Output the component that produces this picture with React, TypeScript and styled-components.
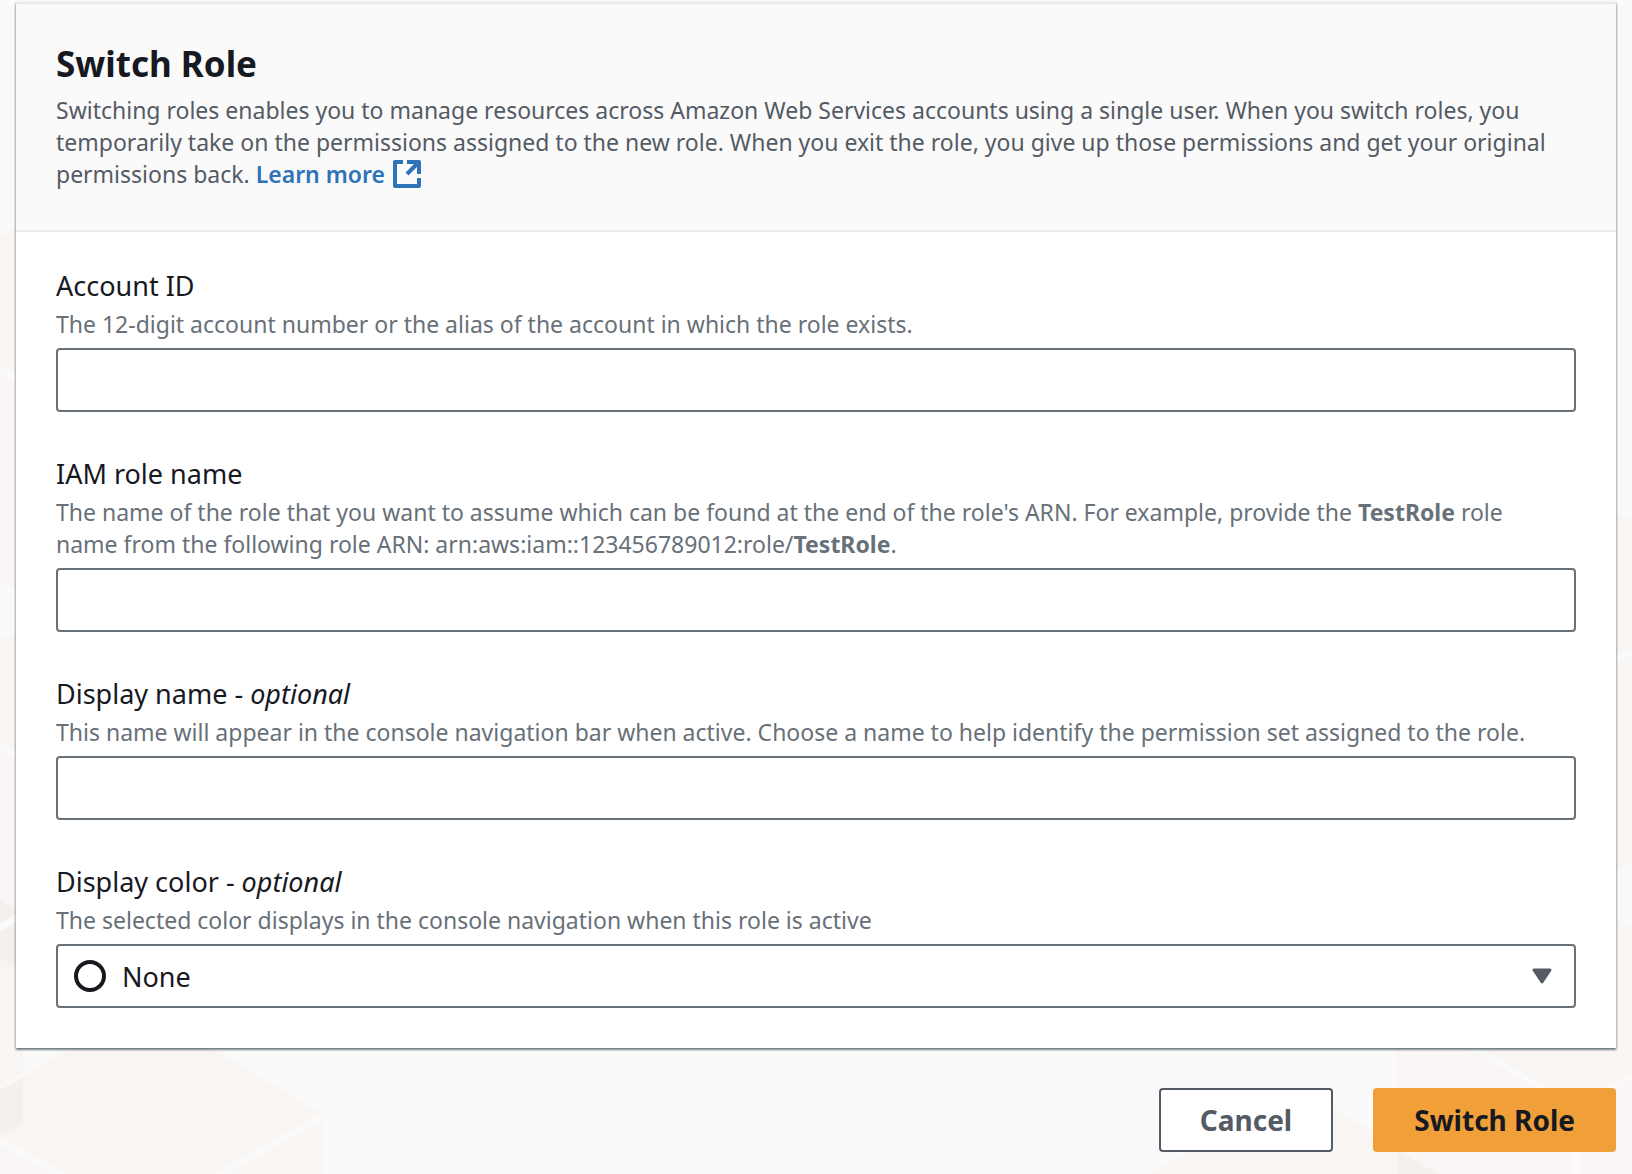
import React, { useId } from "react";
import styled, { createGlobalStyle } from "styled-components";

const color = {
  page: "#fafafa",
  header: "#fafafa",
  divider: "#eaeded",
  heading: "#16191f",
  body: "#545b64",
  hint: "#687078",
  link: "#2e73b8",
  primary: "#f19f39",
};

const GlobalStyle = createGlobalStyle`
  *, *::before, *::after { box-sizing: border-box; }
  html, body, #root { min-height: 100%; }
  html { height: 100%; }
  body {
    margin: 0;
    background: ${color.page};
    color: ${color.heading};
    font-family: "Noto Sans", "Open Sans", sans-serif;
    font-size: 23px;
    font-weight: 400;
    line-height: 32px;
  }
`;

const Page = styled.main`
  position: relative;
  isolation: isolate;
  overflow: hidden;
  min-height: 100vh;
  padding: 2px 16px 22px;
`;

const Backdrop = styled.svg`
  position: absolute;
  top: 0;
  z-index: -1;
  width: 340px;
  height: 1174px;
`;

const LeftBackdrop = styled(Backdrop)`
  left: 0;
`;

const RightBackdrop = styled(Backdrop)`
  right: 0;
  width: 500px;
`;

const Form = styled.form`
  display: flex;
  flex-direction: column;
  gap: 40px;
`;

const Card = styled.section`
  background: #fff;
  border-top: 2px solid ${color.divider};
  box-shadow:
    0 2px 2px 0 rgba(0, 28, 36, 0.4),
    1px 1px 2px 0 rgba(0, 28, 36, 0.2),
    -1px 1px 2px 0 rgba(0, 28, 36, 0.2);
`;

const CardHeader = styled.header`
  padding: 38px 40px 40px;
  background: ${color.header};
  border-bottom: 2px solid ${color.divider};
`;

const Title = styled.h1`
  margin: 0 0 8px;
  font-size: 35px;
  line-height: 44px;
  font-weight: 700;
`;

const Description = styled.p`
  margin: 0;
  color: ${color.body};
`;

const Link = styled.a`
  color: ${color.link};
  font-weight: 600;
  text-decoration: none;
  white-space: nowrap;

  svg {
    width: 28px;
    height: 28px;
    margin-left: 8px;
    vertical-align: -5px;
  }
`;

const Fields = styled.div`
  display: flex;
  flex-direction: column;
  gap: 40px;
  padding: 32px 40px 40px;
`;

const FieldBlock = styled.div`
  display: flex;
  flex-direction: column;
`;

const Label = styled.label`
  font-size: 27px;
  line-height: 44px;
`;

const Hint = styled.p`
  margin: 0 0 8px;
  padding-right: 16px;
  color: ${color.hint};
`;

const controlBox = `
  width: 100%;
  height: 64px;
  margin: 0;
  border: 2px solid ${color.hint};
  border-radius: 4px;
  background: #fff;
  color: ${color.heading};
  font-family: inherit;
  font-size: 27px;
  font-weight: inherit;
`;

const TextInput = styled.input`
  ${controlBox}
  padding: 0 16px;
`;

const SelectWrap = styled.div`
  display: grid;
  align-items: center;

  > * {
    grid-area: 1 / 1;
  }

  > svg {
    pointer-events: none;
  }
`;

const Select = styled.select`
  ${controlBox}
  appearance: none;
  padding: 0 64px;
`;

const ColorRing = styled.svg`
  width: 32px;
  height: 32px;
  margin-left: 18px;
`;

const Caret = styled.svg`
  justify-self: end;
  width: 20px;
  height: 16px;
  margin-right: 24px;
`;

const Actions = styled.div`
  display: flex;
  justify-content: flex-end;
  gap: 40px;
`;

const Button = styled.button<{ $primary?: boolean }>`
  height: 64px;
  padding: 0 39px;
  border: 2px solid ${(p) => (p.$primary ? color.primary : color.body)};
  border-radius: 4px;
  background: ${(p) => (p.$primary ? color.primary : "#fff")};
  color: ${(p) => (p.$primary ? color.heading : color.body)};
  font-family: inherit;
  font-size: 28px;
  font-weight: 700;
  cursor: pointer;
`;

function LeftHexagons() {
  return (
    <LeftBackdrop viewBox="0 0 340 1174" aria-hidden="true">
      <path d="M0 237 L23 224 V593 L0 580Z" fill="#f9f5f2" />
      <path d="M0 370 L23 382 V593 L0 580Z" fill="#faf6f5" />
      <path d="M0 640 L23 628 V1077 L0 1090Z" fill="#f9f5f2" />
      <path d="M0 746 L23 760 V913 L0 900Z" fill="#faf6f5" />
      <path d="M0 900 L23 913 V972 L0 958Z" fill="#f6f0ec" />
      <path d="M0 1090 L142 1006 L320 1113 L323 1118 V1174 H0Z" fill="#f9f5f2" />
      <path d="M0 1090 L23 1077 V1125 L0 1136Z" fill="#f6f0ec" />
      <path d="M0 1140 L64 1174 H0Z" fill="#faf6f5" />
      <path d="M218 1174 L323 1115 V1174Z" fill="#faf6f4" />
      <path
        d="M-4 367 L24 382 M-4 743 L24 759 M-4 930 L24 914 M-4 1138 L70 1180 M210 1180 L326 1114"
        stroke="#fafafa"
        strokeWidth="7"
        fill="none"
      />
      <path d="M-4 1090 L67 1049" stroke="#fafafa" strokeWidth="5" opacity=".6" />
    </LeftBackdrop>
  );
}

function RightHexagons() {
  return (
    <RightBackdrop viewBox="1132 0 500 1174" aria-hidden="true">
      <path d="M1600 503 L1632 521 V862 L1600 879Z" fill="#f9f5f2" />
      <path d="M1600 910 L1632 928 V1174 H1600Z" fill="#f9f5f2" />
      <path d="M1150 1174 L1297 1088 L1397 1145 V1174Z" fill="#f9f5f2" />
      <path d="M1397 1020 H1632 V1174 H1397Z" fill="#faf6f5" />
      <path d="M1430 1020 H1632 V1072 L1576 1106Z" fill="#f9f5f2" />
      <path d="M1397 1151 L1440 1174 H1397Z" fill="#f6f0ec" />
      <path
        d="M1600 669 L1636 649 M1430 1022 L1576 1108 L1636 1073 M1576 1108 V1180"
        stroke="#fafafa"
        strokeWidth="6"
        fill="none"
      />
    </RightBackdrop>
  );
}

function ExternalIcon() {
  return (
    <svg viewBox="0 0 28 28" fill="none" stroke="currentColor" strokeWidth="4" role="img" aria-label="Opens in a new tab">
      <path d="M10 2H2V26H26V18" strokeLinejoin="round" />
      <path d="M14 2H26V14" strokeLinejoin="round" />
      <path d="M14 14L25 3" />
    </svg>
  );
}

type FieldProps = {
  label: string;
  optional?: boolean;
  hint: React.ReactNode;
  children: (ids: { id: string; "aria-describedby": string }) => React.ReactNode;
};

function Field({ label, optional, hint, children }: FieldProps) {
  const id = useId();
  const hintId = `${id}-hint`;
  return (
    <FieldBlock>
      <Label htmlFor={id}>
        {label}
        {optional && (
          <>
            {" - "}
            <i>optional</i>
          </>
        )}
      </Label>
      <Hint id={hintId}>{hint}</Hint>
      {children({ id, "aria-describedby": hintId })}
    </FieldBlock>
  );
}

export default function App() {
  return (
    <Page>
      <GlobalStyle />
      <LeftHexagons />
      <RightHexagons />
      <Form onSubmit={(e) => e.preventDefault()}>
        <Card>
          <CardHeader>
            <Title>Switch Role</Title>
            <Description>
              Switching roles enables you to manage resources across Amazon Web Services accounts using a single user.
              When you switch roles, you temporarily take on the permissions assigned to the new role. When you exit
              the role, you give up those permissions and get your original permissions back.{" "}
              <Link href="#learn-more">
                Learn more
                <ExternalIcon />
              </Link>
            </Description>
          </CardHeader>
          <Fields>
            <Field
              label="Account ID"
              hint="The 12-digit account number or the alias of the account in which the role exists."
            >
              {(ids) => <TextInput type="text" {...ids} />}
            </Field>
            <Field
              label="IAM role name"
              hint={
                <>
                  The name of the role that you want to assume which can be found at the end of the role's ARN. For
                  example, provide the <b>TestRole</b> role name from the following role ARN:
                  arn:aws:iam::123456789012:role/<b>TestRole</b>.
                </>
              }
            >
              {(ids) => <TextInput type="text" {...ids} />}
            </Field>
            <Field
              label="Display name"
              optional
              hint="This name will appear in the console navigation bar when active. Choose a name to help identify the permission set assigned to the role."
            >
              {(ids) => <TextInput type="text" {...ids} />}
            </Field>
            <Field
              label="Display color"
              optional
              hint="The selected color displays in the console navigation when this role is active"
            >
              {(ids) => (
                <SelectWrap>
                  <Select defaultValue="none" {...ids}>
                    <option value="none">None</option>
                  </Select>
                  <ColorRing viewBox="0 0 32 32" aria-hidden="true">
                    <circle cx="16" cy="16" r="14" fill="none" stroke={color.heading} strokeWidth="4" />
                  </ColorRing>
                  <Caret viewBox="0 0 20 16" aria-hidden="true">
                    <path
                      d="M2 2H18L10 14Z"
                      fill={color.body}
                      stroke={color.body}
                      strokeWidth="3"
                      strokeLinejoin="round"
                    />
                  </Caret>
                </SelectWrap>
              )}
            </Field>
          </Fields>
        </Card>
        <Actions>
          <Button type="button">Cancel</Button>
          <Button type="submit" $primary>
            Switch Role
          </Button>
        </Actions>
      </Form>
    </Page>
  );
}
